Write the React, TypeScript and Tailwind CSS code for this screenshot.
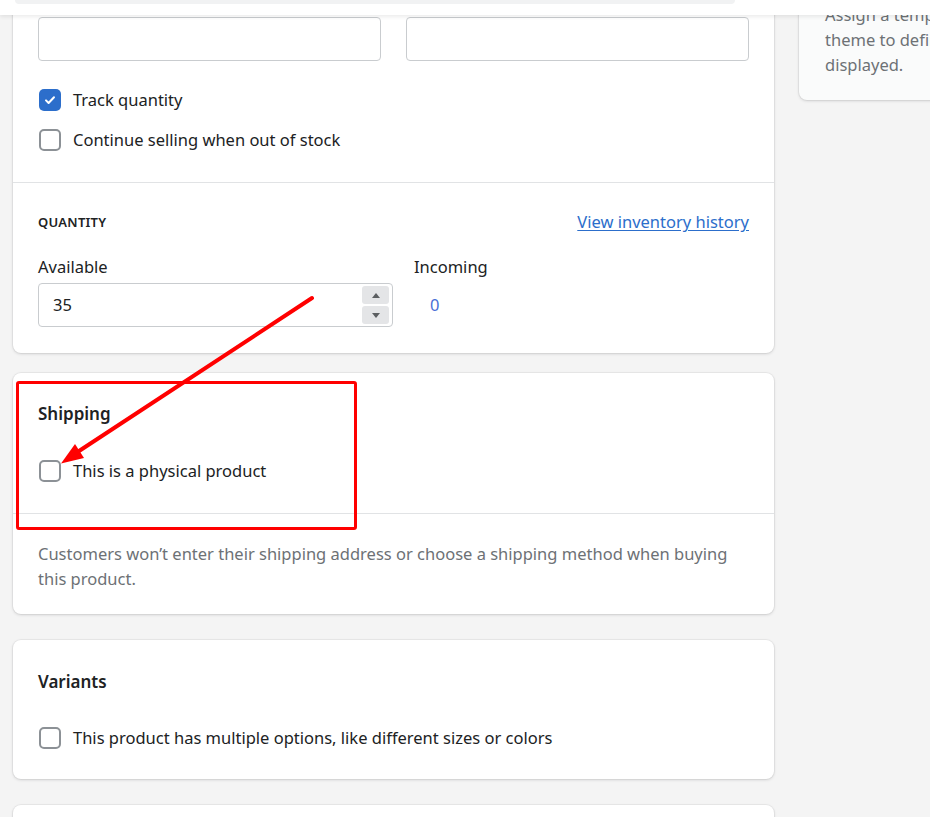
import React from "react";

const Checkbox = ({ checked = false }: { checked?: boolean }) =>
  checked ? (
    <span className="flex h-[22px] w-[22px] shrink-0 items-center justify-center rounded-[5px] bg-[#2c6ecb]">
      <svg width="14" height="14" viewBox="0 0 14 14" fill="none">
        <path d="M3 7.4l2.6 2.6L11 4.2" stroke="white" strokeWidth="2" strokeLinecap="round" strokeLinejoin="round" />
      </svg>
    </span>
  ) : (
    <span className="h-[22px] w-[22px] shrink-0 rounded-[5px] border-2 border-[#8c9196] bg-white" />
  );

const CheckRow = ({ label, checked }: { label: string; checked?: boolean }) => (
  <label className="flex h-6 items-center gap-3 pl-px text-[16.5px] leading-6 text-[#202223]">
    <Checkbox checked={checked} />
    <span>{label}</span>
  </label>
);

const cardCls =
  "bg-white rounded-lg shadow-[0_0_0_1px_rgba(63,63,68,0.05),0_1px_3px_rgba(63,63,68,0.18)]";

const InventoryCard = () => (
  <section className={`${cardCls} rounded-t-none`}>
    <div className="px-[25px] pt-[17px] pb-[30px]">
      <div className="grid grid-cols-2 gap-[25px]">
        <div className="h-[44px] rounded-[4px] border border-[#c9cccf]" />
        <div className="h-[44px] rounded-[4px] border border-[#c9cccf]" />
      </div>
      <div className="mt-[27px] flex flex-col gap-4">
        <CheckRow label="Track quantity" checked />
        <CheckRow label="Continue selling when out of stock" />
      </div>
    </div>
    <div className="border-t border-[#e1e3e5] px-[25px] pt-[29px] pb-[26px]">
      <div className="flex items-center justify-between">
        <h3 className="text-[13px] leading-5 font-semibold tracking-[0.02em] text-[#202223]">QUANTITY</h3>
        <a className="text-[16.5px] leading-5 text-[#2c6ecb] underline underline-offset-2">View inventory history</a>
      </div>
      <div className="mt-[23px] flex">
        <div className="w-[355px]">
          <div className="mb-1 text-[16.5px] leading-6 text-[#202223]">Available</div>
          <div className="flex h-[44px] items-center justify-between rounded-[4px] border border-[#c9cccf] pl-[14px] pr-[3px]">
            <span className="text-[16.5px] text-[#202223]">35</span>
            <div className="flex flex-col gap-[2px]">
              <span className="flex h-[18px] w-[27px] items-center justify-center rounded-[3px] bg-[#e4e5e7]">
                <svg width="8" height="5" viewBox="0 0 8 5"><path d="M0 5L4 0l4 5z" fill="#5c5f62" /></svg>
              </span>
              <span className="flex h-[18px] w-[27px] items-center justify-center rounded-[3px] bg-[#e4e5e7]">
                <svg width="8" height="5" viewBox="0 0 8 5"><path d="M0 0l4 5 4-5z" fill="#5c5f62" /></svg>
              </span>
            </div>
          </div>
        </div>
        <div className="ml-[21px] flex-1">
          <div className="mb-1 text-[16.5px] leading-6 text-[#202223]">Incoming</div>
          <div className="flex h-[44px] items-center pl-4 text-[16.5px] text-[#4a6fd6]">0</div>
        </div>
      </div>
    </div>
  </section>
);

const ShippingCard = () => (
  <section className={`${cardCls} mt-5`}>
    <div className="px-[25px] pt-[29px] pb-[30px]">
      <h2 className="text-[17px] leading-6 font-semibold text-[#202223]">Shipping</h2>
      <div className="mt-[33px]">
        <CheckRow label="This is a physical product" />
      </div>
    </div>
    <div className="border-t border-[#e1e3e5] px-[25px] pt-[27px] pb-[23px] text-[16.5px] leading-[25px] text-[#6d7175]">
      <p>
        <span className="block whitespace-nowrap">
          Customers won’t enter their shipping address or choose a shipping method when buying
        </span>
        <span className="block">this product.</span>
      </p>
    </div>
  </section>
);

const VariantsCard = () => (
  <section className={`${cardCls} mt-[26px] px-[25px] pt-[30px] pb-[29px]`}>
    <h2 className="text-[17px] leading-6 font-semibold text-[#202223]">Variants</h2>
    <div className="mt-[32px]">
      <CheckRow label="This product has multiple options, like different sizes or colors" />
    </div>
  </section>
);

const Annotation = () => (
  <svg className="pointer-events-none absolute inset-0 z-20" width="930" height="817" viewBox="0 0 930 817">
    <rect x="17.5" y="382.5" width="338" height="146" rx="1.5" fill="none" stroke="#ff0000" strokeWidth="3" />
    <line x1="312" y1="298" x2="76" y2="453" stroke="#ff0000" strokeWidth="4" strokeLinecap="round" />
    <polygon points="61,463.5 75,444 84,458" fill="#ff0000" />
  </svg>
);

export default function App() {
  return (
    <div className="relative h-[817px] w-full overflow-hidden bg-[#f4f4f4] font-['Noto_Sans',sans-serif]">
      <header className="absolute left-0 right-0 top-0 z-10 h-[15px] bg-white shadow-[0_2px_4px_rgba(0,0,0,0.08)]">
        <div className="ml-[15px] h-1 w-[720px] rounded-b-[4px] bg-[#f1f2f3]" />
      </header>

      <div className="flex gap-[25px] pl-[13px]">
        <main className="flex w-[761px] shrink-0 flex-col">
          <InventoryCard />
          <ShippingCard />
          <VariantsCard />
          <section className={`${cardCls} mt-[26px] h-[80px]`} />
        </main>

        <aside className="w-[320px] shrink-0">
          <div className="rounded-b-lg bg-[#fafbfb] px-[26px] pt-[2px] pb-[23px] text-[16.5px] leading-[25px] text-[#6d7175] shadow-[0_0_0_1px_rgba(63,63,68,0.05),0_1px_3px_rgba(63,63,68,0.18)]">
            <p className="whitespace-nowrap">Assign a template from your</p>
            <p className="whitespace-nowrap">theme to define how the product is</p>
            <p className="whitespace-nowrap">displayed.</p>
          </div>
        </aside>
      </div>

      <Annotation />
    </div>
  );
}
